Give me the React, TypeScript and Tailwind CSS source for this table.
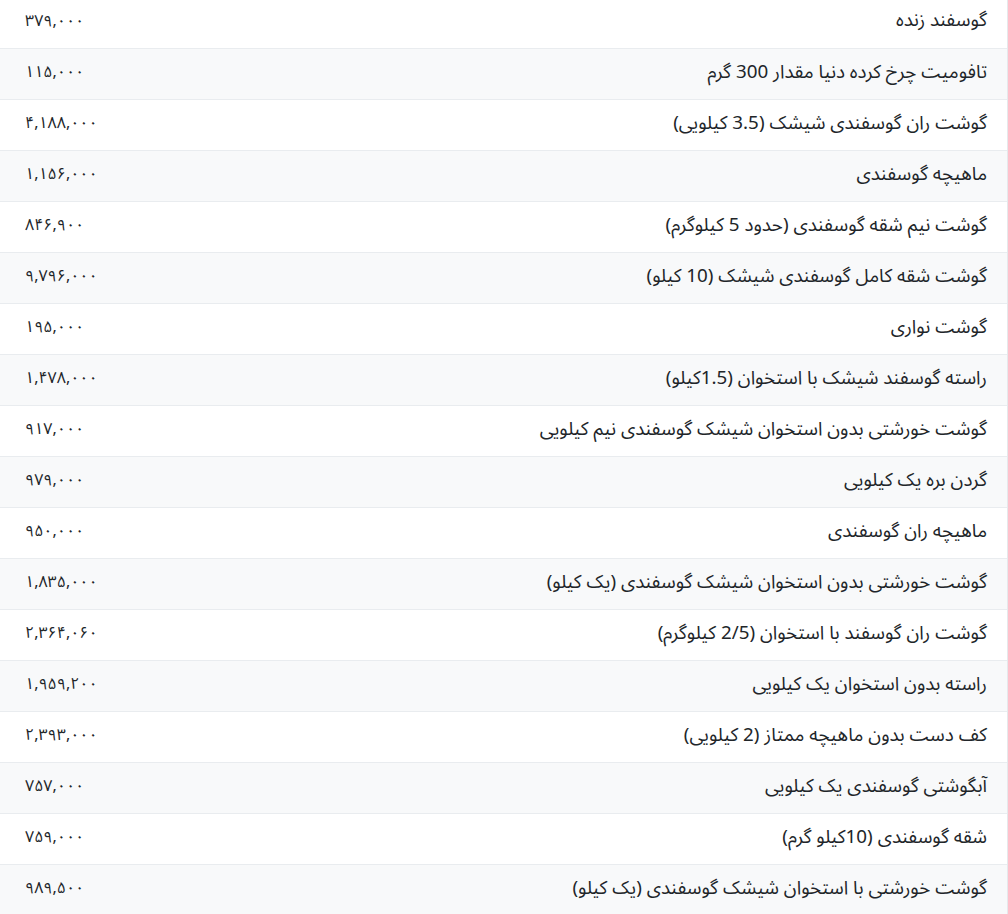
const rows = [
  ["گوسفند زنده", "۳۷۹,۰۰۰"],
  ["تافومیت چرخ کرده دنیا مقدار 300 گرم", "۱۱۵,۰۰۰"],
  ["گوشت ران گوسفندی شیشک (3.5 کیلویی)", "۴,۱۸۸,۰۰۰"],
  ["ماهیچه گوسفندی", "۱,۱۵۶,۰۰۰"],
  ["گوشت نیم شقه گوسفندی (حدود 5 کیلوگرم)", "۸۴۶,۹۰۰"],
  ["گوشت شقه کامل گوسفندی شیشک (10 کیلو)", "۹,۷۹۶,۰۰۰"],
  ["گوشت نواری", "۱۹۵,۰۰۰"],
  ["راسته گوسفند شیشک با استخوان (1.5کیلو)", "۱,۴۷۸,۰۰۰"],
  ["گوشت خورشتی بدون استخوان شیشک گوسفندی نیم کیلویی", "۹۱۷,۰۰۰"],
  ["گردن بره یک کیلویی", "۹۷۹,۰۰۰"],
  ["ماهیچه ران گوسفندی", "۹۵۰,۰۰۰"],
  ["گوشت خورشتی بدون استخوان شیشک گوسفندی (یک کیلو)", "۱,۸۳۵,۰۰۰"],
  ["گوشت ران گوسفند با استخوان (2/5 کیلوگرم)", "۲,۳۶۴,۰۶۰"],
  ["راسته بدون استخوان یک کیلویی", "۱,۹۵۹,۲۰۰"],
  ["کف دست بدون ماهیچه ممتاز (2 کیلویی)", "۲,۳۹۳,۰۰۰"],
  ["آبگوشتی گوسفندی یک کیلویی", "۷۵۷,۰۰۰"],
  ["شقه گوسفندی (10کیلو گرم)", "۷۵۹,۰۰۰"],
  ["گوشت خورشتی با استخوان شیشک گوسفندی (یک کیلو)", "۹۸۹,۵۰۰"],
];

export default function App() {
  return (
    <div className="w-[1008px] h-[914px] overflow-hidden bg-[#f3efe9]">
      {/* Price table */}
      <div
        dir="rtl"
        className="-mt-[3px] border-r border-[#e6e8eb] border-b border-b-[#c9c9c9] text-[#212529] font-['Noto_Sans_Arabic','Vazirmatn','DejaVu_Sans',sans-serif]"
      >
        {rows.map(([name, price], i) => (
          <div
            key={i}
            className={`flex items-center justify-between pr-[20px] pl-[25px] ${
              i === 0 ? "h-[51px]" : "h-[51px] border-t border-[#e9ecef]"
            } ${i === rows.length - 1 ? "h-[48px]" : ""} ${i % 2 === 1 ? "bg-[#f8f9fa]" : "bg-white"}`}
          >
            <span className="pb-[4px] text-[18.8px]">{name}</span>
            <span dir="ltr" className="pb-[4px] text-[16px]">{price}</span>
          </div>
        ))}
      </div>
    </div>
  );
}
